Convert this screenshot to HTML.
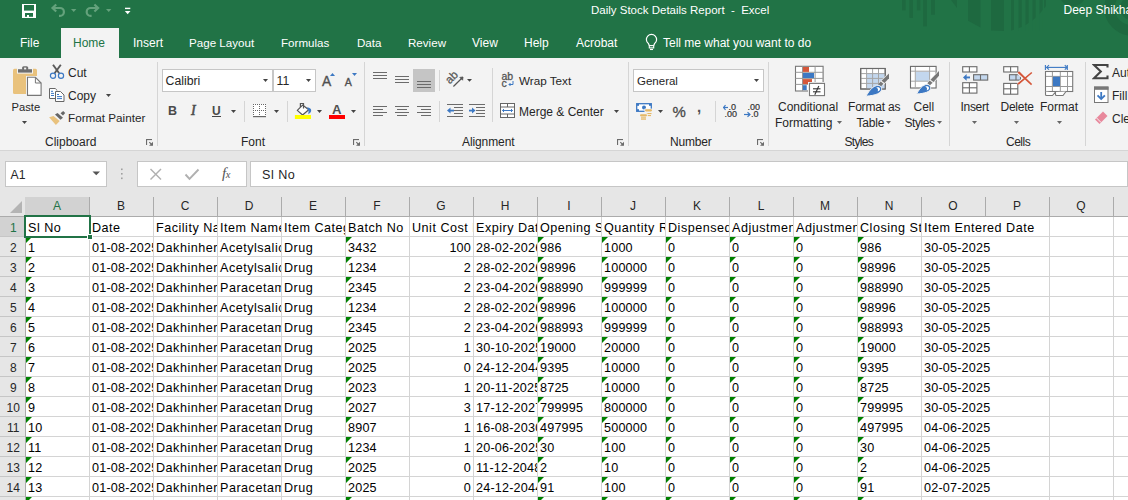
<!DOCTYPE html>
<html><head><meta charset="utf-8"><style>*{margin:0;padding:0;box-sizing:border-box}
html,body{width:1128px;height:500px;overflow:hidden;background:#fff;font-family:"Liberation Sans",sans-serif;position:relative}
.a{position:absolute;white-space:nowrap}
.tt{position:absolute;color:#fff;font-size:12px;white-space:nowrap}
.tab{position:absolute;color:#fff;font-size:12px;top:37px;white-space:nowrap}
.rl{position:absolute;font-size:12px;color:#262626;white-space:nowrap}
.hd{font-size:12px;text-align:center;line-height:19px;height:19px}
.c{font-size:12.6px;color:#000;height:19px;line-height:19px;overflow:hidden;padding-left:2px;top:0}
.txt{letter-spacing:0.5px}
.num{letter-spacing:0.2px}

.rhd{font-size:12px;padding-left:1.5px;padding-top:1px}
</style></head><body><div class="a" style="left:0px;top:0px;width:1128px;height:58px;background:#217346;"></div>
<svg class="a" style="left:880px;top:0px" width="248" height="58" viewBox="0 0 248 58">
<rect x="22" y="0" width="3.6" height="10.4" fill="#1e6940"/>
<rect x="29.4" y="0" width="3.6" height="17.9" fill="#1e6940"/>
<rect x="36.8" y="0" width="3.5" height="10.4" fill="#1e6940"/>
<rect x="43.2" y="0" width="3.7" height="26.4" fill="#1e6940"/>
<rect x="51" y="0" width="4" height="14.7" fill="#1e6940"/>
<path d="M71 0 L77 0 L77 8 Z" fill="#1e6940"/>
<path d="M88 0 L100.5 0 L100.5 27.4 L88 20.7 Z" fill="#1e6940"/>
<path d="M111 0 L124 0 L124 31 L111 30.5 Z" fill="#1e6940"/>
<path d="M131 0 L166 0 L166 6 Q152 26 131 30.5 Z" fill="#1e6940"/>
<rect x="134" y="0" width="4.6" height="31" fill="#217346"/>
<rect x="141.8" y="0" width="3.7" height="31" fill="#217346"/>
<rect x="148.7" y="0" width="3.8" height="31" fill="#217346"/>
<rect x="155.7" y="0" width="3.8" height="31" fill="#217346"/>
<rect x="162.7" y="0" width="1.3" height="31" fill="#217346"/>
<path d="M181 0 L204 0 Q200 6 192.5 6 Q185 6 181 0 Z" fill="#1e6940"/>
<circle cx="252" cy="8" r="22.5" stroke="#1e6940" stroke-width="10.4" fill="none"/><circle cx="252" cy="8" r="12" fill="#1e6940"/>
</svg>
<div class="a" style="left:591px;top:5.27px;font-size:11.5px;line-height:1;color:#fff;">Daily Stock Details Report&nbsp; - &nbsp;Excel</div>
<div class="a" style="left:1063.5px;top:4.04px;font-size:12px;line-height:1;color:#fff;">Deep Shikha</div>
<svg class="a" style="left:21px;top:3px" width="16" height="16" viewBox="0 0 16 16"><rect x="1" y="1" width="14" height="14" fill="#fff"/><rect x="3" y="2" width="10" height="5.6" fill="#217346"/><rect x="4" y="10" width="8" height="3.8" fill="#217346"/><rect x="6" y="12" width="2" height="2" fill="#fff"/></svg>
<svg class="a" style="left:48px;top:2px" width="20" height="18" viewBox="0 0 20 18"><path d="M4.5,6 L12,6 A3.9,3.9 0 0 1 12,13.8 L11,13.8" stroke="#64a27c" stroke-width="2.2" fill="none"/><polyline points="8.2,2.5 4.5,6 8.2,9.5" stroke="#64a27c" stroke-width="2.2" fill="none"/></svg>
<svg class="a" style="left:70.8px;top:8.8px" width="6" height="4" viewBox="0 0 6 4"><polygon points="0,0 5.4,0 2.7,3" fill="#64a27c"/></svg>
<svg class="a" style="left:83px;top:2px" width="20" height="18" viewBox="0 0 20 18"><path d="M15.1,6 L7.6,6 A3.9,3.9 0 0 0 7.6,13.8 L8.6,13.8" stroke="#64a27c" stroke-width="2.2" fill="none"/><polyline points="11.4,2.5 15.1,6 11.4,9.5" stroke="#64a27c" stroke-width="2.2" fill="none"/></svg>
<svg class="a" style="left:106px;top:8.8px" width="6" height="4" viewBox="0 0 6 4"><polygon points="0,0 5.4,0 2.7,3" fill="#64a27c"/></svg>
<svg class="a" style="left:124px;top:7px" width="8" height="8" viewBox="0 0 8 8"><rect x="1" y="0.7" width="5.3" height="1.4" fill="#fff"/><polygon points="0.8,4 6.5,4 3.65,7.2" fill="#fff"/></svg>
<div class="a" style="left:61px;top:28px;width:58px;height:30px;background:#f3f3f3;"></div>
<div class="a" style="left:20px;top:36.84px;font-size:12px;line-height:1;color:#fff;">File</div>
<div class="a" style="left:73px;top:36.84px;font-size:12px;line-height:1;color:#217346;">Home</div>
<div class="a" style="left:133px;top:36.84px;font-size:12px;line-height:1;color:#fff;">Insert</div>
<div class="a" style="left:189px;top:37.18px;font-size:11.6px;line-height:1;color:#fff;">Page Layout</div>
<div class="a" style="left:281px;top:37.18px;font-size:11.6px;line-height:1;color:#fff;">Formulas</div>
<div class="a" style="left:357px;top:37.18px;font-size:11.6px;line-height:1;color:#fff;">Data</div>
<div class="a" style="left:408px;top:37.18px;font-size:11.6px;line-height:1;color:#fff;">Review</div>
<div class="a" style="left:472px;top:36.84px;font-size:12px;line-height:1;color:#fff;">View</div>
<div class="a" style="left:524px;top:36.84px;font-size:12px;line-height:1;color:#fff;">Help</div>
<div class="a" style="left:576px;top:36.84px;font-size:12px;line-height:1;color:#fff;">Acrobat</div>
<div class="a" style="left:663px;top:36.84px;font-size:12px;line-height:1;color:#fff;">Tell me what you want to do</div>
<svg class="a" style="left:644px;top:32px" width="16" height="20" viewBox="0 0 16 20"><path d="M5.3,13.6 L4.4,11.6 A5.1,5.1 0 1 1 10.6,11.6 L9.7,13.6" stroke="#fff" stroke-width="1.2" fill="none" stroke-linejoin="round"/><rect x="5.3" y="13.6" width="4.4" height="2.3" stroke="#fff" stroke-width="1.1" fill="none"/><line x1="6" y1="17.5" x2="9" y2="17.5" stroke="#fff" stroke-width="1.1"/></svg>
<div class="a" style="left:0px;top:58px;width:1128px;height:92px;background:#f3f3f3;"></div>
<div class="a" style="left:0px;top:150px;width:1128px;height:1px;background:#d5d5d5;"></div>
<div class="a" style="left:157px;top:62px;width:1px;height:84px;background:#d5d5d5;"></div>
<div class="a" style="left:364px;top:62px;width:1px;height:84px;background:#d5d5d5;"></div>
<div class="a" style="left:628px;top:62px;width:1px;height:84px;background:#d5d5d5;"></div>
<div class="a" style="left:768px;top:62px;width:1px;height:84px;background:#d5d5d5;"></div>
<div class="a" style="left:949px;top:62px;width:1px;height:84px;background:#d5d5d5;"></div>
<div class="a" style="left:1085px;top:62px;width:1px;height:84px;background:#d5d5d5;"></div>
<div class="a" style="left:244px;top:101px;width:1px;height:21px;background:#d5d5d5;"></div>
<div class="a" style="left:287px;top:101px;width:1px;height:21px;background:#d5d5d5;"></div>
<div class="a" style="left:439px;top:101px;width:1px;height:21px;background:#d5d5d5;"></div>
<div class="a" style="left:715px;top:101px;width:1px;height:21px;background:#d5d5d5;"></div>
<div class="a" style="left:439px;top:70px;width:1px;height:21px;background:#d5d5d5;"></div>
<div class="a" style="left:492px;top:68px;width:1px;height:54px;background:#d5d5d5;"></div>
<div class="a" style="left:45px;top:135.84px;font-size:12px;line-height:1;color:#262626;letter-spacing:0px">Clipboard</div>
<div class="a" style="left:241px;top:135.84px;font-size:12px;line-height:1;color:#262626;letter-spacing:0px">Font</div>
<div class="a" style="left:462px;top:135.84px;font-size:12px;line-height:1;color:#262626;letter-spacing:-0.1px">Alignment</div>
<div class="a" style="left:670px;top:135.84px;font-size:12px;line-height:1;color:#262626;letter-spacing:-0.2px">Number</div>
<div class="a" style="left:844.5px;top:135.84px;font-size:12px;line-height:1;color:#262626;letter-spacing:-0.7px">Styles</div>
<div class="a" style="left:1006px;top:135.84px;font-size:12px;line-height:1;color:#262626;letter-spacing:-0.5px">Cells</div>
<svg class="a" style="left:145px;top:138px" width="10" height="10" viewBox="0 0 10 10"><rect x="1" y="1" width="6" height="1.1" fill="#6b6b6b"/><rect x="1" y="1" width="1.1" height="6" fill="#6b6b6b"/><polygon points="8,3.8 8,7.8 4,7.8" fill="#6b6b6b"/><line x1="4.3" y1="4.1" x2="7.2" y2="7" stroke="#6b6b6b" stroke-width="1.1"/></svg>
<svg class="a" style="left:352px;top:138px" width="10" height="10" viewBox="0 0 10 10"><rect x="1" y="1" width="6" height="1.1" fill="#6b6b6b"/><rect x="1" y="1" width="1.1" height="6" fill="#6b6b6b"/><polygon points="8,3.8 8,7.8 4,7.8" fill="#6b6b6b"/><line x1="4.3" y1="4.1" x2="7.2" y2="7" stroke="#6b6b6b" stroke-width="1.1"/></svg>
<svg class="a" style="left:616px;top:138px" width="10" height="10" viewBox="0 0 10 10"><rect x="1" y="1" width="6" height="1.1" fill="#6b6b6b"/><rect x="1" y="1" width="1.1" height="6" fill="#6b6b6b"/><polygon points="8,3.8 8,7.8 4,7.8" fill="#6b6b6b"/><line x1="4.3" y1="4.1" x2="7.2" y2="7" stroke="#6b6b6b" stroke-width="1.1"/></svg>
<svg class="a" style="left:756px;top:138px" width="10" height="10" viewBox="0 0 10 10"><rect x="1" y="1" width="6" height="1.1" fill="#6b6b6b"/><rect x="1" y="1" width="1.1" height="6" fill="#6b6b6b"/><polygon points="8,3.8 8,7.8 4,7.8" fill="#6b6b6b"/><line x1="4.3" y1="4.1" x2="7.2" y2="7" stroke="#6b6b6b" stroke-width="1.1"/></svg>
<svg class="a" style="left:10px;top:62px" width="35" height="38" viewBox="0 0 35 38">
<rect x="3" y="6.8" width="24" height="25.1" rx="1.5" fill="#e9c27d"/>
<rect x="7" y="6" width="16" height="5.6" fill="#f3f3f3"/>
<rect x="8" y="7.2" width="14" height="3.4" fill="#6f6f6f"/>
<rect x="12.1" y="4.2" width="6.1" height="4" rx="1.5" fill="#6f6f6f"/>
<rect x="14.1" y="5.6" width="2.1" height="1.8" fill="#f3f3f3"/>
<rect x="16" y="14" width="17" height="21" fill="#f3f3f3"/>
<path d="M17.5,15.3 L25.4,15.3 L31.1,21 L31.1,33.4 L17.5,33.4 Z" fill="#fff" stroke="#777" stroke-width="1.1"/>
<polyline points="25.4,15.3 25.4,21 31.1,21" fill="none" stroke="#777" stroke-width="1"/>
</svg>
<div class="a" style="left:11.5px;top:101.52px;font-size:11.2px;line-height:1;color:#262626;">Paste</div>
<svg class="a" style="left:22px;top:121px" width="6" height="4" viewBox="0 0 6 4"><polygon points="0,0 5,0 2.5,3" fill="#444"/></svg>
<svg class="a" style="left:46px;top:62px" width="22" height="20" viewBox="0 0 22 20">
<path d="M7,2.8 L13.2,11.2" stroke="#5a5a5a" stroke-width="1.9"/>
<path d="M14.8,2.8 L8.6,11.2" stroke="#5a5a5a" stroke-width="1.9"/>
<circle cx="7" cy="13.8" r="2.6" fill="none" stroke="#3c78c3" stroke-width="1.2"/>
<circle cx="15" cy="13.8" r="2.6" fill="none" stroke="#3c78c3" stroke-width="1.2"/>
</svg>
<div class="a" style="left:68px;top:66.84px;font-size:12px;line-height:1;color:#262626;">Cut</div>
<svg class="a" style="left:48px;top:87px" width="18" height="16" viewBox="0 0 18 16">
<path d="M7,11.5 H1.5 V1.5 H7.2 L9.3,3.6" stroke="#666" stroke-width="1" fill="#fff"/>
<rect x="2.5" y="2.5" width="5" height="8.5" fill="#fff"/>
<line x1="3" y1="4.3" x2="5" y2="4.3" stroke="#3c78c3"/><line x1="3" y1="6.4" x2="6" y2="6.4" stroke="#3c78c3"/><line x1="3" y1="8.5" x2="6" y2="8.5" stroke="#3c78c3"/>
<path d="M7.5,4.5 H12.5 L16,8 V14.5 H7.5 Z" fill="#fff" stroke="#666" stroke-width="1"/>
<line x1="9" y1="7.5" x2="11" y2="7.5" stroke="#3c78c3"/><line x1="9" y1="9.6" x2="14" y2="9.6" stroke="#3c78c3"/><line x1="9" y1="11.6" x2="14" y2="11.6" stroke="#3c78c3"/>
</svg>
<div class="a" style="left:68px;top:89.84px;font-size:12px;line-height:1;color:#262626;">Copy</div>
<svg class="a" style="left:106px;top:94px" width="6" height="4" viewBox="0 0 6 4"><polygon points="0,0 5,0 2.5,3" fill="#444"/></svg>
<svg class="a" style="left:46px;top:106px" width="22" height="22" viewBox="0 0 22 22">
<polygon points="3.1,11.2 7.5,9.9 13.7,15 9.9,18.9" fill="#e9c27d"/>
<polygon points="9,8.6 11.5,7 17,11.7 14.5,13.7" fill="#666"/>
<polygon points="14.5,7.3 17.2,5.1 19.2,7 17,9.5" fill="#666"/>
</svg>
<div class="a" style="left:68px;top:112.10px;font-size:11.7px;line-height:1;color:#262626;">Format Painter</div>
<div class="a" style="left:162px;top:69px;width:111px;height:23px;background:#fff;border:1px solid #c6c6c6"></div>
<div class="a" style="left:273px;top:69px;width:43px;height:23px;background:#fff;border:1px solid #c6c6c6"></div>
<div class="a" style="left:165.5px;top:75.19px;font-size:12.3px;line-height:1;color:#262626;">Calibri</div>
<svg class="a" style="left:263px;top:79px" width="6" height="4" viewBox="0 0 6 4"><polygon points="0,0 5,0 2.5,3" fill="#444"/></svg>
<div class="a" style="left:276.5px;top:75.19px;font-size:12.3px;line-height:1;color:#262626;">11</div>
<svg class="a" style="left:306px;top:79px" width="6" height="4" viewBox="0 0 6 4"><polygon points="0,0 5,0 2.5,3" fill="#444"/></svg>
<div class="a" style="left:322px;top:74.62px;font-size:13.8px;line-height:1;color:#505050;-webkit-text-stroke:0.35px #505050">A</div>
<svg class="a" style="left:330px;top:73px" width="6" height="4" viewBox="0 0 6 4"><polygon points="0,3 5,3 2.5,0" fill="#3c78c3"/></svg>
<div class="a" style="left:344.8px;top:77.33px;font-size:10.6px;line-height:1;color:#505050;-webkit-text-stroke:0.35px #505050">A</div>
<svg class="a" style="left:352px;top:73px" width="6" height="4" viewBox="0 0 6 4"><polygon points="0,0 5,0 2.5,3" fill="#3c78c3"/></svg>
<div class="a" style="left:168px;top:104.92px;font-size:12.5px;line-height:1;color:#4a4a4a;"><b>B</b></div>
<div class="a" style="left:191px;top:103.65px;font-size:14px;line-height:1;color:#4a4a4a;font-family:Liberation Serif;-webkit-text-stroke:0.5px #4a4a4a"><i>I</i></div>
<div class="a" style="left:212px;top:105.34px;font-size:12px;line-height:1;color:#4a4a4a;"><b>U</b></div>
<div class="a" style="left:212px;top:116px;width:9px;height:1.2px;background:#444;"></div>
<svg class="a" style="left:231px;top:110px" width="6" height="4" viewBox="0 0 6 4"><polygon points="0,0 5,0 2.5,3" fill="#444"/></svg>
<svg class="a" style="left:253px;top:104px" width="14" height="14" viewBox="0 0 14 14"><rect x="0" y="0" width="13" height="13" fill="#fff"/><rect x="0" y="0" width="1" height="1" fill="#666"/><rect x="2" y="0" width="1" height="1" fill="#666"/><rect x="4" y="0" width="1" height="1" fill="#666"/><rect x="6" y="0" width="1" height="1" fill="#666"/><rect x="8" y="0" width="1" height="1" fill="#666"/><rect x="10" y="0" width="1" height="1" fill="#666"/><rect x="12" y="0" width="1" height="1" fill="#666"/><rect x="0" y="2" width="1" height="1" fill="#666"/><rect x="6" y="2" width="1" height="1" fill="#666"/><rect x="12" y="2" width="1" height="1" fill="#666"/><rect x="0" y="4" width="1" height="1" fill="#666"/><rect x="6" y="4" width="1" height="1" fill="#666"/><rect x="12" y="4" width="1" height="1" fill="#666"/><rect x="0" y="6" width="1" height="1" fill="#666"/><rect x="2" y="6" width="1" height="1" fill="#666"/><rect x="4" y="6" width="1" height="1" fill="#666"/><rect x="6" y="6" width="1" height="1" fill="#666"/><rect x="8" y="6" width="1" height="1" fill="#666"/><rect x="10" y="6" width="1" height="1" fill="#666"/><rect x="12" y="6" width="1" height="1" fill="#666"/><rect x="0" y="8" width="1" height="1" fill="#666"/><rect x="6" y="8" width="1" height="1" fill="#666"/><rect x="12" y="8" width="1" height="1" fill="#666"/><rect x="0" y="10" width="1" height="1" fill="#666"/><rect x="6" y="10" width="1" height="1" fill="#666"/><rect x="12" y="10" width="1" height="1" fill="#666"/><rect x="0" y="12" width="13" height="1.2" fill="#666"/></svg>
<svg class="a" style="left:274px;top:110px" width="6" height="4" viewBox="0 0 6 4"><polygon points="0,0 5,0 2.5,3" fill="#444"/></svg>
<svg class="a" style="left:292px;top:100px" width="22" height="22" viewBox="0 0 22 22"><polygon points="5.3,10.4 10.6,5.1 16.7,9.7 10.6,15" fill="#fff" stroke="#555" stroke-width="1.2" stroke-linejoin="round"/><path d="M8.4,7 V3.5 H11.5 V8.6" stroke="#555" stroke-width="1.2" fill="none"/><path d="M15,7.3 Q19.5,8 19.2,11 Q18.8,13 16.3,14.2 Q17.3,11 15,7.3 Z" fill="#3c78c3"/><rect x="2.9" y="15" width="16.1" height="4" fill="#ffff00"/></svg>
<svg class="a" style="left:317px;top:110px" width="6" height="4" viewBox="0 0 6 4"><polygon points="0,0 5,0 2.5,3" fill="#444"/></svg>
<div class="a" style="left:332px;top:103.33px;font-size:13.2px;line-height:1;color:#505050;"><b>A</b></div>
<div class="a" style="left:329px;top:115px;width:16px;height:4px;background:#ff0000;"></div>
<svg class="a" style="left:351px;top:110px" width="6" height="4" viewBox="0 0 6 4"><polygon points="0,0 5,0 2.5,3" fill="#444"/></svg>
<svg class="a" style="left:373px;top:72px" width="14" height="8" viewBox="0 0 14 8"><rect x="0" y="0" width="14" height="1" fill="#6b6b6b"/><rect x="0" y="3" width="14" height="1" fill="#6b6b6b"/><rect x="0" y="6" width="14" height="1" fill="#6b6b6b"/></svg>
<svg class="a" style="left:395px;top:76px" width="14" height="8" viewBox="0 0 14 8"><rect x="0" y="0" width="14" height="1" fill="#6b6b6b"/><rect x="0" y="3" width="14" height="1" fill="#6b6b6b"/><rect x="0" y="6" width="14" height="1" fill="#6b6b6b"/></svg>
<div class="a" style="left:413px;top:69px;width:22px;height:23px;background:#c5c5c5;"></div>
<svg class="a" style="left:417px;top:81px" width="14" height="8" viewBox="0 0 14 8"><rect x="0" y="0" width="14" height="1" fill="#6b6b6b"/><rect x="0" y="3" width="14" height="1" fill="#6b6b6b"/><rect x="0" y="6" width="14" height="1" fill="#6b6b6b"/></svg>
<svg class="a" style="left:443px;top:68px" width="32" height="22" viewBox="0 0 32 22"><text x="0" y="0" transform="translate(6.8,16.6) rotate(-45)" font-size="11.5" fill="#555" font-family="Liberation Sans" stroke="#555" stroke-width="0.25">ab</text><line x1="10.4" y1="18.5" x2="19.8" y2="9.3" stroke="#555" stroke-width="1.2"/><polygon points="20,9 16.8,9.4 19.6,12.2" fill="#555" stroke="#555" stroke-width="0.8"/><polygon points="24,11 29,11 26.5,13.8" fill="#444"/></svg>
<svg class="a" style="left:373px;top:106px" width="14" height="10" viewBox="0 0 14 10"><rect x="0" y="0" width="14" height="1" fill="#6b6b6b"/><rect x="0" y="3" width="10" height="1" fill="#6b6b6b"/><rect x="0" y="6" width="14" height="1" fill="#6b6b6b"/><rect x="0" y="9" width="10" height="1" fill="#6b6b6b"/></svg>
<svg class="a" style="left:395px;top:106px" width="14" height="10" viewBox="0 0 14 10"><rect x="0" y="0" width="14" height="1" fill="#6b6b6b"/><rect x="2" y="3" width="10" height="1" fill="#6b6b6b"/><rect x="0" y="6" width="14" height="1" fill="#6b6b6b"/><rect x="2" y="9" width="10" height="1" fill="#6b6b6b"/></svg>
<svg class="a" style="left:417px;top:106px" width="14" height="10" viewBox="0 0 14 10"><rect x="0" y="0" width="14" height="1" fill="#6b6b6b"/><rect x="4" y="3" width="10" height="1" fill="#6b6b6b"/><rect x="0" y="6" width="14" height="1" fill="#6b6b6b"/><rect x="4" y="9" width="10" height="1" fill="#6b6b6b"/></svg>
<svg class="a" style="left:447px;top:104px" width="17" height="13" viewBox="0 0 17 13"><rect x="0" y="0" width="16" height="1" fill="#6b6b6b"/><rect x="7" y="3" width="9" height="1" fill="#6b6b6b"/><rect x="7" y="6" width="9" height="1" fill="#6b6b6b"/><rect x="7" y="9" width="9" height="1" fill="#6b6b6b"/><rect x="0" y="12" width="16" height="1" fill="#6b6b6b"/><polygon points="0,6.5 3.5,3.5 3.5,9.5" fill="#3c78c3"/><rect x="3" y="5.7" width="4" height="1.8" fill="#3c78c3"/></svg>
<svg class="a" style="left:469px;top:104px" width="17" height="13" viewBox="0 0 17 13"><rect x="0" y="0" width="16" height="1" fill="#6b6b6b"/><rect x="7" y="3" width="9" height="1" fill="#6b6b6b"/><rect x="7" y="6" width="9" height="1" fill="#6b6b6b"/><rect x="7" y="9" width="9" height="1" fill="#6b6b6b"/><rect x="0" y="12" width="16" height="1" fill="#6b6b6b"/><polygon points="6.5,6.5 3,3.5 3,9.5" fill="#3c78c3"/><rect x="0" y="5.7" width="4" height="1.8" fill="#3c78c3"/></svg>
<svg class="a" style="left:501px;top:72px" width="15" height="16" viewBox="0 0 15 16"><text x="0.5" y="8" font-size="10.5" fill="#555" stroke="#555" stroke-width="0.3" font-family="Liberation Sans">ab</text><text x="0.5" y="15" font-size="10.5" fill="#555" stroke="#555" stroke-width="0.3" font-family="Liberation Sans">c</text><path d="M12 9 L12 12.5 L8 12.5" stroke="#3c78c3" fill="none" stroke-width="1"/><polyline points="9.5,11 8,12.5 9.5,14" stroke="#3c78c3" fill="none"/></svg>
<div class="a" style="left:519px;top:75.10px;font-size:11.7px;line-height:1;color:#262626;">Wrap Text</div>
<svg class="a" style="left:500px;top:103px" width="16" height="15" viewBox="0 0 16 15"><rect x="0.5" y="0.5" width="14" height="14" fill="#fff" stroke="#666" stroke-width="1"/><line x1="0.5" y1="4" x2="14.5" y2="4" stroke="#666"/><line x1="0.5" y1="11" x2="14.5" y2="11" stroke="#666"/><line x1="7.5" y1="0.5" x2="7.5" y2="4" stroke="#666"/><line x1="7.5" y1="11" x2="7.5" y2="14.5" stroke="#666"/><line x1="2.5" y1="7.5" x2="12.5" y2="7.5" stroke="#3c78c3" stroke-width="1"/><polyline points="4,6 2.5,7.5 4,9" stroke="#3c78c3" fill="none"/><polyline points="11,6 12.5,7.5 11,9" stroke="#3c78c3" fill="none"/></svg>
<div class="a" style="left:519px;top:105.84px;font-size:12px;line-height:1;color:#262626;">Merge &amp; Center</div>
<svg class="a" style="left:614px;top:110px" width="6" height="4" viewBox="0 0 6 4"><polygon points="0,0 5,0 2.5,3" fill="#444"/></svg>
<div class="a" style="left:633px;top:69px;width:131px;height:23px;background:#fff;border:1px solid #c6c6c6"></div>
<div class="a" style="left:637px;top:75.87px;font-size:11.5px;line-height:1;color:#262626;">General</div>
<svg class="a" style="left:754px;top:79px" width="6" height="4" viewBox="0 0 6 4"><polygon points="0,0 5,0 2.5,3" fill="#444"/></svg>
<svg class="a" style="left:633px;top:100px" width="24" height="22" viewBox="0 0 24 22"><rect x="3.7" y="3.7" width="14.6" height="7.6" fill="#fff" stroke="#3c78c3" stroke-width="1.3"/><rect x="4" y="4" width="2" height="1.8" fill="#3c78c3"/><rect x="16" y="4" width="2" height="1.8" fill="#3c78c3"/><rect x="4" y="9.2" width="2" height="1.8" fill="#3c78c3"/><circle cx="11" cy="7.4" r="2" fill="#3c78c3"/><rect x="11.5" y="8.6" width="8.5" height="8.5" fill="#f3f3f3"/><rect x="12" y="9.2" width="7" height="2.2" rx="1.1" fill="#e5b865"/><rect x="13.5" y="13" width="5" height="1.1" fill="#e5b865"/><rect x="14.5" y="15" width="3.5" height="1.1" fill="#e5b865"/><rect x="6.5" y="13.3" width="8" height="7" fill="#f3f3f3"/><rect x="7" y="14.2" width="7" height="2.2" rx="1.1" fill="#e5b865"/><rect x="8" y="17.3" width="5" height="1.1" fill="#e5b865"/><rect x="8" y="18.6" width="5" height="1.1" fill="#e5b865"/></svg>
<svg class="a" style="left:658px;top:110px" width="6" height="4" viewBox="0 0 6 4"><polygon points="0,0 5,0 2.5,3" fill="#444"/></svg>
<div class="a" style="left:672.5px;top:104.30px;font-size:15px;line-height:1;color:#4a4a4a;-webkit-text-stroke:0.3px #4a4a4a">%</div>
<div class="a" style="left:697px;top:98.80px;font-size:15px;line-height:1;color:#505050;"><b>,</b></div>
<svg class="a" style="left:723px;top:104px" width="15" height="14" viewBox="0 0 15 14"><text x="5.5" y="6" font-size="9" fill="#333" stroke="#333" stroke-width="0.2" font-family="Liberation Sans">.0</text><text x="1.5" y="13" font-size="9" fill="#333" stroke="#333" stroke-width="0.2" font-family="Liberation Sans">.00</text><line x1="0.5" y1="3.5" x2="5" y2="3.5" stroke="#3c78c3" stroke-width="1.2"/><polyline points="2.5,1.2 0.5,3.5 2.5,5.8" stroke="#3c78c3" fill="none" stroke-width="1.2"/></svg>
<svg class="a" style="left:744px;top:104px" width="16" height="14" viewBox="0 0 16 14"><text x="3.5" y="6" font-size="9" fill="#333" stroke="#333" stroke-width="0.2" font-family="Liberation Sans">.00</text><text x="7" y="13" font-size="9" fill="#333" stroke="#333" stroke-width="0.2" font-family="Liberation Sans">.0</text><line x1="0" y1="10.5" x2="6" y2="10.5" stroke="#3c78c3" stroke-width="1.2"/><polyline points="3.5,8.2 6,10.5 3.5,12.8" stroke="#3c78c3" fill="none" stroke-width="1.2"/></svg>
<svg class="a" style="left:793px;top:64px" width="34" height="34" viewBox="0 0 34 34"><rect x="2.5" y="2.3" width="27.6" height="24.7" fill="#fff" stroke="#777" stroke-width="1.1"/><line x1="9.5" y1="2.3" x2="9.5" y2="27" stroke="#999"/><line x1="22.1" y1="2.3" x2="22.1" y2="27" stroke="#999"/><line x1="2.5" y1="8.3" x2="30.1" y2="8.3" stroke="#999"/><line x1="2.5" y1="14.4" x2="30.1" y2="14.4" stroke="#999"/><line x1="2.5" y1="20.4" x2="30.1" y2="20.4" stroke="#999"/><rect x="9.9" y="3" width="6.1" height="4.9" fill="#d5573a"/><rect x="9.9" y="15.1" width="9.1" height="4.9" fill="#d5573a"/><rect x="9.9" y="9" width="11.1" height="5" fill="#3c78c3"/><rect x="9.9" y="21.2" width="3.8" height="4.9" fill="#3c78c3"/><rect x="15" y="18" width="19" height="16" fill="#f3f3f3"/><rect x="16.5" y="19.4" width="15" height="12.2" fill="#fff" stroke="#777" stroke-width="1.1"/><line x1="20" y1="24.8" x2="27.5" y2="24.8" stroke="#333" stroke-width="1.1"/><line x1="20" y1="27.8" x2="27.5" y2="27.8" stroke="#333" stroke-width="1.1"/><line x1="25.8" y1="22" x2="21.8" y2="30.8" stroke="#333" stroke-width="1.1"/></svg>
<div class="a" style="left:778px;top:100.84px;font-size:12px;line-height:1;color:#262626;">Conditional</div>
<div class="a" style="left:775px;top:116.84px;font-size:12px;line-height:1;color:#262626;">Formatting</div>
<svg class="a" style="left:837px;top:121px" width="6" height="4" viewBox="0 0 6 4"><polygon points="0,0 5,0 2.5,3" fill="#666"/></svg>
<svg class="a" style="left:858px;top:66px" width="34" height="32" viewBox="0 0 34 32"><rect x="2.7" y="2.5" width="24.5" height="20.5" fill="#fff" stroke="#6b6b6b" stroke-width="1.1"/><rect x="8.6" y="7.6" width="18" height="15" fill="#c3d7ee"/><g stroke="#a5a5a5" stroke-width="1"><line x1="8.6" y1="3" x2="8.6" y2="22.5"/><line x1="14.6" y1="3" x2="14.6" y2="22.5"/><line x1="20.5" y1="3" x2="20.5" y2="22.5"/><line x1="3" y1="7.6" x2="27" y2="7.6"/><line x1="3" y1="12.4" x2="27" y2="12.4"/><line x1="3" y1="17.4" x2="27" y2="17.4"/></g><rect x="2.7" y="2.5" width="24.5" height="20.5" fill="none" stroke="#6b6b6b" stroke-width="1.1"/><path d="M31.5,6 L31.5,13 L25,19.5 L21,16.5 Z" fill="#f3f3f3"/><path d="M31,7.5 L31,12.3 L26.5,17 L23.5,14.7 Z" fill="#777"/><path d="M22.7,15.6 L25.5,17.8 L23,20.3 L20.3,18.2 Z" fill="#777"/><path d="M8,30.2 C10.5,26 13.5,21 18.5,19.6 C22,18.8 24,21 23.6,23.8 C23,27 18,29.5 8,30.2 Z" fill="#3c78c3" stroke="#f3f3f3" stroke-width="1"/><path d="M18.2,21.6 C20,20.8 22.2,21.4 22,23.2 C21.8,24.6 20.5,25.2 19.6,25.3 C20.4,24.2 20.2,22.6 18.2,21.6 Z" fill="#fff"/></svg>
<div class="a" style="left:848px;top:100.84px;font-size:12px;line-height:1;color:#262626;letter-spacing:-0.2px">Format as</div>
<div class="a" style="left:856.5px;top:116.84px;font-size:12px;line-height:1;color:#262626;letter-spacing:-0.2px">Table</div>
<svg class="a" style="left:886px;top:121px" width="6" height="4" viewBox="0 0 6 4"><polygon points="0,0 5,0 2.5,3" fill="#666"/></svg>
<svg class="a" style="left:908px;top:64px" width="34" height="32" viewBox="0 0 34 32"><rect x="2.5" y="2.4" width="25.6" height="21.6" fill="#fff" stroke="#6b6b6b" stroke-width="1.1"/><rect x="7.8" y="7.7" width="13.4" height="9.2" fill="#c3d7ee"/><g stroke="#a5a5a5" stroke-width="1"><line x1="7.3" y1="3" x2="7.3" y2="23.5"/><line x1="21.6" y1="3" x2="21.6" y2="23.5"/><line x1="3" y1="7.2" x2="27.6" y2="7.2"/><line x1="3" y1="17.2" x2="27.6" y2="17.2"/></g><path d="M31.5,5.5 L31.5,12.5 L24,20.5 L20,17.5 Z" fill="#f3f3f3"/><path d="M31,7 L31,11.8 L25.5,18 L22.5,15.7 Z" fill="#777"/><path d="M21.7,16.6 L24.5,18.8 L22,21.3 L19.3,19.2 Z" fill="#777"/><path d="M8.5,30 C11,26 13,22 17.5,20.6 C21,19.8 23,22 22.6,24.6 C22,27.8 17,29.5 8.5,30 Z" fill="#3c78c3" stroke="#f3f3f3" stroke-width="1"/><path d="M17.2,22.6 C19,21.8 21.2,22.4 21,24.2 C20.8,25.6 19.5,26.2 18.6,26.3 C19.4,25.2 19.2,23.6 17.2,22.6 Z" fill="#fff"/></svg>
<div class="a" style="left:913.5px;top:100.84px;font-size:12px;line-height:1;color:#262626;">Cell</div>
<div class="a" style="left:904.5px;top:116.84px;font-size:12px;line-height:1;color:#262626;letter-spacing:-0.45px">Styles</div>
<svg class="a" style="left:937px;top:121px" width="6" height="4" viewBox="0 0 6 4"><polygon points="0,0 5,0 2.5,3" fill="#666"/></svg>
<svg class="a" style="left:958px;top:62px" width="32" height="34" viewBox="0 0 32 34"><rect x="4.7" y="4.7" width="14.2" height="5.3" fill="#fff" stroke="#6b6b6b" stroke-width="1.1"/><line x1="11.4" y1="4.7" x2="11.4" y2="10" stroke="#6b6b6b" stroke-width="1.1"/><rect x="15.6" y="12.7" width="14.1" height="5.4" fill="#c3d7ee" stroke="#6b6b6b" stroke-width="1.1"/><line x1="22.5" y1="12.7" x2="22.5" y2="18.1" stroke="#6b6b6b" stroke-width="1.1"/><polygon points="5,15.4 8.6,12 8.6,18.8" fill="#3c78c3"/><rect x="8" y="14.5" width="4" height="1.9" fill="#3c78c3"/><rect x="4.7" y="20.7" width="14.2" height="10.4" fill="#fff" stroke="#6b6b6b" stroke-width="1.1"/><line x1="11.4" y1="20.7" x2="11.4" y2="31.1" stroke="#6b6b6b" stroke-width="1.1"/><line x1="4.7" y1="25.8" x2="18.9" y2="25.8" stroke="#6b6b6b" stroke-width="1.1"/></svg>
<div class="a" style="left:960.5px;top:100.84px;font-size:12px;line-height:1;color:#262626;letter-spacing:-0.3px">Insert</div>
<svg class="a" style="left:972px;top:121px" width="6" height="4" viewBox="0 0 6 4"><polygon points="0,0 5,0 2.5,3" fill="#666"/></svg>
<svg class="a" style="left:999px;top:62px" width="36" height="34" viewBox="0 0 36 34"><rect x="4.7" y="4.7" width="14.1" height="5.3" fill="#fff" stroke="#6b6b6b" stroke-width="1.1"/><line x1="11.6" y1="4.7" x2="11.6" y2="10" stroke="#6b6b6b" stroke-width="1.1"/><rect x="10.5" y="12.7" width="11" height="5.4" fill="#c3d7ee" stroke="#6b6b6b" stroke-width="1.1"/><line x1="17" y1="12.7" x2="17" y2="18.1" stroke="#6b6b6b" stroke-width="1.1"/><rect x="4.7" y="21.4" width="14.1" height="10.8" fill="#fff" stroke="#6b6b6b" stroke-width="1.1"/><line x1="11.6" y1="21.4" x2="11.6" y2="32.2" stroke="#6b6b6b" stroke-width="1.1"/><line x1="4.7" y1="26.8" x2="18.8" y2="26.8" stroke="#6b6b6b" stroke-width="1.1"/><line x1="19.1" y1="10.1" x2="32.8" y2="22.7" stroke="#f3f3f3" stroke-width="4"/><line x1="32.8" y1="10.4" x2="19.1" y2="22.3" stroke="#f3f3f3" stroke-width="4"/><path d="M18.5,10.6 L20.5,9.4 L33,22.6 Z" fill="#d5573a"/><path d="M33.2,10.2 L18.8,22.8 L18.4,21.5 Z" fill="#d5573a"/><line x1="19.3" y1="10.2" x2="32.6" y2="22.6" stroke="#d5573a" stroke-width="1.6"/><line x1="32.8" y1="10.5" x2="19.2" y2="22.1" stroke="#d5573a" stroke-width="1.6"/></svg>
<div class="a" style="left:1000.5px;top:100.84px;font-size:12px;line-height:1;color:#262626;letter-spacing:-0.25px">Delete</div>
<svg class="a" style="left:1014px;top:121px" width="6" height="4" viewBox="0 0 6 4"><polygon points="0,0 5,0 2.5,3" fill="#666"/></svg>
<svg class="a" style="left:1042px;top:62px" width="34" height="36" viewBox="0 0 34 36"><g stroke="#3c78c3" stroke-width="1.1" fill="none"><line x1="3.4" y1="2.9" x2="3.4" y2="7.9"/><line x1="25.3" y1="2.9" x2="25.3" y2="7.9"/><line x1="4.5" y1="5.4" x2="24.5" y2="5.4"/><polyline points="7,3.2 4.6,5.4 7,7.6"/><polyline points="22.8,3.2 25,5.4 22.8,7.6"/></g><rect x="3.5" y="9.5" width="27.2" height="20" fill="#fff"/><g stroke="#999" stroke-width="1"><line x1="10.4" y1="9.5" x2="10.4" y2="29.5"/><line x1="18.3" y1="9.5" x2="18.3" y2="29.5"/><line x1="25.5" y1="9.5" x2="25.5" y2="29.5"/><line x1="3.5" y1="14.4" x2="30.7" y2="14.4"/><line x1="3.5" y1="24.5" x2="30.7" y2="24.5"/></g><rect x="3.5" y="9.5" width="27.2" height="20" fill="none" stroke="#777" stroke-width="1.1"/><rect x="11" y="14.7" width="7" height="9.4" fill="#3c78c3"/><path d="M3.5,29.5 V32.5 Q3.5,33.5 4.5,33.5 H10.5 L13,30.5 M13.5,30 V32.5 Q13.5,33.5 14.5,33.5 H21 L24,29.5" stroke="#777" fill="#fff" stroke-width="1.1"/></svg>
<div class="a" style="left:1040px;top:100.84px;font-size:12px;line-height:1;color:#262626;">Format</div>
<svg class="a" style="left:1056.5px;top:121px" width="6" height="4" viewBox="0 0 6 4"><polygon points="0,0 5,0 2.5,3" fill="#666"/></svg>
<svg class="a" style="left:1092px;top:63px" width="18" height="18" viewBox="0 0 18 18"><path d="M15.5,4.5 L15.5,2 L2,2 L8.8,8.5 L2,15.2 L15.5,15.2 L15.5,12.5" stroke="#444" stroke-width="2.1" fill="none" stroke-linejoin="miter"/></svg>
<div class="a" style="left:1112px;top:66.84px;font-size:12px;line-height:1;color:#262626;">AutoSum</div>
<svg class="a" style="left:1093px;top:86px" width="16" height="18" viewBox="0 0 16 18"><rect x="1.5" y="1" width="13.5" height="15.5" fill="#fff" stroke="#777" stroke-width="1"/><rect x="1" y="0.6" width="14.5" height="3.2" fill="#777"/><line x1="8.2" y1="6" x2="8.2" y2="13" stroke="#3c78c3" stroke-width="1.8"/><polyline points="4.5,9.3 8.2,13 11.9,9.3" stroke="#3c78c3" stroke-width="1.8" fill="none"/></svg>
<div class="a" style="left:1112px;top:89.84px;font-size:12px;line-height:1;color:#262626;">Fill</div>
<svg class="a" style="left:1093px;top:110px" width="16" height="15" viewBox="0 0 16 15"><path d="M2,9.5 L10,1.5 L14.5,6 L6.5,14 Z" fill="#e8889c"/><line x1="3.6" y1="8" x2="8.1" y2="12.5" stroke="#f3f3f3" stroke-width="1"/></svg>
<div class="a" style="left:1112px;top:112.84px;font-size:12px;line-height:1;color:#262626;">Clear</div>
<div class="a" style="left:0px;top:151px;width:1128px;height:46px;background:#e6e6e6;"></div>
<div class="a" style="left:5px;top:161px;width:102px;height:26px;background:#fff;border:1px solid #c6c6c6"></div>
<div class="a" style="left:10.5px;top:169.07px;font-size:12.2px;line-height:1;color:#262626;">A1</div>
<svg class="a" style="left:92px;top:171px" width="9" height="5" viewBox="0 0 9 5"><polygon points="0.5,0.5 8,0.5 4.25,4.3" fill="#555"/></svg>
<svg class="a" style="left:120px;top:167px" width="4" height="14" viewBox="0 0 4 14"><rect x="1" y="1.5" width="1.6" height="1.6" fill="#a0a0a0"/><rect x="1" y="6" width="1.6" height="1.6" fill="#a0a0a0"/><rect x="1" y="10.5" width="1.6" height="1.6" fill="#a0a0a0"/></svg>
<div class="a" style="left:137px;top:161px;width:110px;height:26px;background:#fff;border:1px solid #c6c6c6"></div>
<svg class="a" style="left:149px;top:168px" width="14" height="13" viewBox="0 0 14 13"><line x1="1.5" y1="1" x2="12" y2="11.5" stroke="#b0b0b0" stroke-width="1.4"/><line x1="12" y1="1" x2="1.5" y2="11.5" stroke="#b0b0b0" stroke-width="1.4"/></svg>
<svg class="a" style="left:184px;top:168px" width="16" height="13" viewBox="0 0 16 13"><polyline points="1.5,6.5 5.5,10.8 14.5,1.5" stroke="#b0b0b0" stroke-width="1.9" fill="none"/></svg>
<div class="a" style="left:222px;top:166.30px;font-size:15px;line-height:1;color:#555;font-family:Liberation Serif"><i>f</i><span style="font-size:10.5px;position:relative;left:-0.5px"><i>x</i></span></div>
<div class="a" style="left:250px;top:161px;width:878px;height:26px;background:#fff;border:1px solid #c6c6c6"></div>
<div class="a" style="left:262px;top:168.73px;font-size:12.6px;line-height:1;color:#262626;letter-spacing:0.5px">Sl No</div><div class="a" style="left:0;top:197px;width:1128px;height:19px;background:#e6e6e6"></div>
<div class="a" style="left:25px;top:197px;width:64px;height:19px;background:#d2d2d2"></div>
<div class="a" style="left:0;top:217px;width:25px;height:283px;background:#e6e6e6"></div>
<div class="a" style="left:0;top:217px;width:25px;height:19px;background:#d2d2d2"></div>
<svg class="a" style="left:0;top:197px" width="25" height="19"><polygon points="22,4 22,16 10,16" fill="#b4b4b4"/></svg>
<div class="a" style="left:89px;top:217px;width:1px;height:283px;background:#d4d4d4"></div>
<div class="a" style="left:89px;top:197px;width:1px;height:19px;background:#ababab"></div>
<div class="a" style="left:153px;top:217px;width:1px;height:283px;background:#d4d4d4"></div>
<div class="a" style="left:153px;top:197px;width:1px;height:19px;background:#ababab"></div>
<div class="a" style="left:217px;top:217px;width:1px;height:283px;background:#d4d4d4"></div>
<div class="a" style="left:217px;top:197px;width:1px;height:19px;background:#ababab"></div>
<div class="a" style="left:281px;top:217px;width:1px;height:283px;background:#d4d4d4"></div>
<div class="a" style="left:281px;top:197px;width:1px;height:19px;background:#ababab"></div>
<div class="a" style="left:345px;top:217px;width:1px;height:283px;background:#d4d4d4"></div>
<div class="a" style="left:345px;top:197px;width:1px;height:19px;background:#ababab"></div>
<div class="a" style="left:409px;top:217px;width:1px;height:283px;background:#d4d4d4"></div>
<div class="a" style="left:409px;top:197px;width:1px;height:19px;background:#ababab"></div>
<div class="a" style="left:473px;top:217px;width:1px;height:283px;background:#d4d4d4"></div>
<div class="a" style="left:473px;top:197px;width:1px;height:19px;background:#ababab"></div>
<div class="a" style="left:537px;top:217px;width:1px;height:283px;background:#d4d4d4"></div>
<div class="a" style="left:537px;top:197px;width:1px;height:19px;background:#ababab"></div>
<div class="a" style="left:601px;top:217px;width:1px;height:283px;background:#d4d4d4"></div>
<div class="a" style="left:601px;top:197px;width:1px;height:19px;background:#ababab"></div>
<div class="a" style="left:665px;top:217px;width:1px;height:283px;background:#d4d4d4"></div>
<div class="a" style="left:665px;top:197px;width:1px;height:19px;background:#ababab"></div>
<div class="a" style="left:729px;top:217px;width:1px;height:283px;background:#d4d4d4"></div>
<div class="a" style="left:729px;top:197px;width:1px;height:19px;background:#ababab"></div>
<div class="a" style="left:793px;top:217px;width:1px;height:283px;background:#d4d4d4"></div>
<div class="a" style="left:793px;top:197px;width:1px;height:19px;background:#ababab"></div>
<div class="a" style="left:857px;top:217px;width:1px;height:283px;background:#d4d4d4"></div>
<div class="a" style="left:857px;top:197px;width:1px;height:19px;background:#ababab"></div>
<div class="a" style="left:921px;top:217px;width:1px;height:283px;background:#d4d4d4"></div>
<div class="a" style="left:921px;top:197px;width:1px;height:19px;background:#ababab"></div>
<div class="a" style="left:985px;top:197px;width:1px;height:19px;background:#ababab"></div>
<div class="a" style="left:1049px;top:217px;width:1px;height:283px;background:#d4d4d4"></div>
<div class="a" style="left:1049px;top:197px;width:1px;height:19px;background:#ababab"></div>
<div class="a" style="left:1113px;top:217px;width:1px;height:283px;background:#d4d4d4"></div>
<div class="a" style="left:1113px;top:197px;width:1px;height:19px;background:#ababab"></div>
<div class="a" style="left:25px;top:236px;width:1103px;height:1px;background:#d4d4d4"></div>
<div class="a" style="left:0;top:236px;width:25px;height:1px;background:#c6c6c6"></div>
<div class="a" style="left:25px;top:256px;width:1103px;height:1px;background:#d4d4d4"></div>
<div class="a" style="left:0;top:256px;width:25px;height:1px;background:#c6c6c6"></div>
<div class="a" style="left:25px;top:276px;width:1103px;height:1px;background:#d4d4d4"></div>
<div class="a" style="left:0;top:276px;width:25px;height:1px;background:#c6c6c6"></div>
<div class="a" style="left:25px;top:296px;width:1103px;height:1px;background:#d4d4d4"></div>
<div class="a" style="left:0;top:296px;width:25px;height:1px;background:#c6c6c6"></div>
<div class="a" style="left:25px;top:316px;width:1103px;height:1px;background:#d4d4d4"></div>
<div class="a" style="left:0;top:316px;width:25px;height:1px;background:#c6c6c6"></div>
<div class="a" style="left:25px;top:336px;width:1103px;height:1px;background:#d4d4d4"></div>
<div class="a" style="left:0;top:336px;width:25px;height:1px;background:#c6c6c6"></div>
<div class="a" style="left:25px;top:356px;width:1103px;height:1px;background:#d4d4d4"></div>
<div class="a" style="left:0;top:356px;width:25px;height:1px;background:#c6c6c6"></div>
<div class="a" style="left:25px;top:376px;width:1103px;height:1px;background:#d4d4d4"></div>
<div class="a" style="left:0;top:376px;width:25px;height:1px;background:#c6c6c6"></div>
<div class="a" style="left:25px;top:396px;width:1103px;height:1px;background:#d4d4d4"></div>
<div class="a" style="left:0;top:396px;width:25px;height:1px;background:#c6c6c6"></div>
<div class="a" style="left:25px;top:416px;width:1103px;height:1px;background:#d4d4d4"></div>
<div class="a" style="left:0;top:416px;width:25px;height:1px;background:#c6c6c6"></div>
<div class="a" style="left:25px;top:436px;width:1103px;height:1px;background:#d4d4d4"></div>
<div class="a" style="left:0;top:436px;width:25px;height:1px;background:#c6c6c6"></div>
<div class="a" style="left:25px;top:456px;width:1103px;height:1px;background:#d4d4d4"></div>
<div class="a" style="left:0;top:456px;width:25px;height:1px;background:#c6c6c6"></div>
<div class="a" style="left:25px;top:476px;width:1103px;height:1px;background:#d4d4d4"></div>
<div class="a" style="left:0;top:476px;width:25px;height:1px;background:#c6c6c6"></div>
<div class="a" style="left:25px;top:496px;width:1103px;height:1px;background:#d4d4d4"></div>
<div class="a" style="left:0;top:496px;width:25px;height:1px;background:#c6c6c6"></div>
<div class="a" style="left:0;top:216px;width:1128px;height:1px;background:#ababab"></div>
<div class="a" style="left:25px;top:217px;width:1px;height:283px;background:#ababab"></div>
<div class="a hd" style="left:25px;top:197px;width:64px;color:#217346">A</div>
<div class="a hd" style="left:89px;top:197px;width:64px;color:#262626">B</div>
<div class="a hd" style="left:153px;top:197px;width:64px;color:#262626">C</div>
<div class="a hd" style="left:217px;top:197px;width:64px;color:#262626">D</div>
<div class="a hd" style="left:281px;top:197px;width:64px;color:#262626">E</div>
<div class="a hd" style="left:345px;top:197px;width:64px;color:#262626">F</div>
<div class="a hd" style="left:409px;top:197px;width:64px;color:#262626">G</div>
<div class="a hd" style="left:473px;top:197px;width:64px;color:#262626">H</div>
<div class="a hd" style="left:537px;top:197px;width:64px;color:#262626">I</div>
<div class="a hd" style="left:601px;top:197px;width:64px;color:#262626">J</div>
<div class="a hd" style="left:665px;top:197px;width:64px;color:#262626">K</div>
<div class="a hd" style="left:729px;top:197px;width:64px;color:#262626">L</div>
<div class="a hd" style="left:793px;top:197px;width:64px;color:#262626">M</div>
<div class="a hd" style="left:857px;top:197px;width:64px;color:#262626">N</div>
<div class="a hd" style="left:921px;top:197px;width:64px;color:#262626">O</div>
<div class="a hd" style="left:985px;top:197px;width:64px;color:#262626">P</div>
<div class="a hd" style="left:1049px;top:197px;width:64px;color:#262626">Q</div>
<div class="a hd" style="left:1113px;top:197px;width:64px;color:#262626">R</div>
<div class="a hd rhd" style="left:0;top:218px;width:25px;height:19px;line-height:19px;color:#217346">1</div>
<div class="a hd rhd" style="left:0;top:238px;width:25px;height:19px;line-height:19px;color:#262626">2</div>
<div class="a hd rhd" style="left:0;top:258px;width:25px;height:19px;line-height:19px;color:#262626">3</div>
<div class="a hd rhd" style="left:0;top:278px;width:25px;height:19px;line-height:19px;color:#262626">4</div>
<div class="a hd rhd" style="left:0;top:298px;width:25px;height:19px;line-height:19px;color:#262626">5</div>
<div class="a hd rhd" style="left:0;top:318px;width:25px;height:19px;line-height:19px;color:#262626">6</div>
<div class="a hd rhd" style="left:0;top:338px;width:25px;height:19px;line-height:19px;color:#262626">7</div>
<div class="a hd rhd" style="left:0;top:358px;width:25px;height:19px;line-height:19px;color:#262626">8</div>
<div class="a hd rhd" style="left:0;top:378px;width:25px;height:19px;line-height:19px;color:#262626">9</div>
<div class="a hd rhd" style="left:0;top:398px;width:25px;height:19px;line-height:19px;color:#262626">10</div>
<div class="a hd rhd" style="left:0;top:418px;width:25px;height:19px;line-height:19px;color:#262626">11</div>
<div class="a hd rhd" style="left:0;top:438px;width:25px;height:19px;line-height:19px;color:#262626">12</div>
<div class="a hd rhd" style="left:0;top:458px;width:25px;height:19px;line-height:19px;color:#262626">13</div>
<div class="a hd rhd" style="left:0;top:478px;width:25px;height:19px;line-height:19px;color:#262626">14</div>
<div class="a c txt" style="left:26px;top:219px;width:63px;">Sl No</div>
<div class="a c txt" style="left:90px;top:219px;width:63px;">Date</div>
<div class="a c txt" style="left:154px;top:219px;width:63px;">Facility Name</div>
<div class="a c txt" style="left:218px;top:219px;width:63px;">Item Name</div>
<div class="a c txt" style="left:282px;top:219px;width:63px;">Item Category</div>
<div class="a c txt" style="left:346px;top:219px;width:63px;">Batch No</div>
<div class="a c txt" style="left:410px;top:219px;width:63px;">Unit Cost Price</div>
<div class="a c txt" style="left:474px;top:219px;width:63px;">Expiry Date</div>
<div class="a c txt" style="left:538px;top:219px;width:63px;">Opening Stock</div>
<div class="a c txt" style="left:602px;top:219px;width:63px;">Quantity Received</div>
<div class="a c txt" style="left:666px;top:219px;width:63px;">Dispensed</div>
<div class="a c txt" style="left:730px;top:219px;width:63px;">Adjustment</div>
<div class="a c txt" style="left:794px;top:219px;width:63px;">Adjustment</div>
<div class="a c txt" style="left:858px;top:219px;width:63px;">Closing Stock</div>
<div class="a c txt" style="left:922px;top:219px;width:127px;background:#fff;top:217px;height:19px;line-height:23px;">Item Entered Date</div>
<div class="a c num" style="left:26px;top:239px;width:63px;">1</div>
<svg class="a" style="left:26px;top:237px" width="6" height="6"><polygon points="0,0 6,0 0,6" fill="#008000"/></svg>
<div class="a c num" style="left:90px;top:239px;width:63px;">01-08-2025</div>
<div class="a c txt" style="left:154px;top:239px;width:63px;">Dakhinhera</div>
<div class="a c txt" style="left:218px;top:239px;width:63px;">Acetylsalicylic</div>
<div class="a c txt" style="left:282px;top:239px;width:63px;">Drug</div>
<div class="a c num" style="left:346px;top:239px;width:63px;">3432</div>
<svg class="a" style="left:346px;top:237px" width="6" height="6"><polygon points="0,0 6,0 0,6" fill="#008000"/></svg>
<div class="a c num" style="left:410px;top:239px;width:63px;text-align:right;padding-right:2px">100</div>
<div class="a c num" style="left:474px;top:239px;width:63px;">28-02-2026</div>
<div class="a c num" style="left:538px;top:239px;width:63px;">986</div>
<svg class="a" style="left:538px;top:237px" width="6" height="6"><polygon points="0,0 6,0 0,6" fill="#008000"/></svg>
<div class="a c num" style="left:602px;top:239px;width:63px;">1000</div>
<svg class="a" style="left:602px;top:237px" width="6" height="6"><polygon points="0,0 6,0 0,6" fill="#008000"/></svg>
<div class="a c num" style="left:666px;top:239px;width:63px;">0</div>
<svg class="a" style="left:666px;top:237px" width="6" height="6"><polygon points="0,0 6,0 0,6" fill="#008000"/></svg>
<div class="a c num" style="left:730px;top:239px;width:63px;">0</div>
<svg class="a" style="left:730px;top:237px" width="6" height="6"><polygon points="0,0 6,0 0,6" fill="#008000"/></svg>
<div class="a c num" style="left:794px;top:239px;width:63px;">0</div>
<svg class="a" style="left:794px;top:237px" width="6" height="6"><polygon points="0,0 6,0 0,6" fill="#008000"/></svg>
<div class="a c num" style="left:858px;top:239px;width:63px;">986</div>
<svg class="a" style="left:858px;top:237px" width="6" height="6"><polygon points="0,0 6,0 0,6" fill="#008000"/></svg>
<div class="a c num" style="left:922px;top:239px;width:127px;">30-05-2025</div>
<div class="a c num" style="left:26px;top:259px;width:63px;">2</div>
<svg class="a" style="left:26px;top:257px" width="6" height="6"><polygon points="0,0 6,0 0,6" fill="#008000"/></svg>
<div class="a c num" style="left:90px;top:259px;width:63px;">01-08-2025</div>
<div class="a c txt" style="left:154px;top:259px;width:63px;">Dakhinhera</div>
<div class="a c txt" style="left:218px;top:259px;width:63px;">Acetylsalicylic</div>
<div class="a c txt" style="left:282px;top:259px;width:63px;">Drug</div>
<div class="a c num" style="left:346px;top:259px;width:63px;">1234</div>
<svg class="a" style="left:346px;top:257px" width="6" height="6"><polygon points="0,0 6,0 0,6" fill="#008000"/></svg>
<div class="a c num" style="left:410px;top:259px;width:63px;text-align:right;padding-right:2px">2</div>
<div class="a c num" style="left:474px;top:259px;width:63px;">28-02-2026</div>
<div class="a c num" style="left:538px;top:259px;width:63px;">98996</div>
<svg class="a" style="left:538px;top:257px" width="6" height="6"><polygon points="0,0 6,0 0,6" fill="#008000"/></svg>
<div class="a c num" style="left:602px;top:259px;width:63px;">100000</div>
<svg class="a" style="left:602px;top:257px" width="6" height="6"><polygon points="0,0 6,0 0,6" fill="#008000"/></svg>
<div class="a c num" style="left:666px;top:259px;width:63px;">0</div>
<svg class="a" style="left:666px;top:257px" width="6" height="6"><polygon points="0,0 6,0 0,6" fill="#008000"/></svg>
<div class="a c num" style="left:730px;top:259px;width:63px;">0</div>
<svg class="a" style="left:730px;top:257px" width="6" height="6"><polygon points="0,0 6,0 0,6" fill="#008000"/></svg>
<div class="a c num" style="left:794px;top:259px;width:63px;">0</div>
<svg class="a" style="left:794px;top:257px" width="6" height="6"><polygon points="0,0 6,0 0,6" fill="#008000"/></svg>
<div class="a c num" style="left:858px;top:259px;width:63px;">98996</div>
<svg class="a" style="left:858px;top:257px" width="6" height="6"><polygon points="0,0 6,0 0,6" fill="#008000"/></svg>
<div class="a c num" style="left:922px;top:259px;width:127px;">30-05-2025</div>
<div class="a c num" style="left:26px;top:279px;width:63px;">3</div>
<svg class="a" style="left:26px;top:277px" width="6" height="6"><polygon points="0,0 6,0 0,6" fill="#008000"/></svg>
<div class="a c num" style="left:90px;top:279px;width:63px;">01-08-2025</div>
<div class="a c txt" style="left:154px;top:279px;width:63px;">Dakhinhera</div>
<div class="a c txt" style="left:218px;top:279px;width:63px;">Paracetamol</div>
<div class="a c txt" style="left:282px;top:279px;width:63px;">Drug</div>
<div class="a c num" style="left:346px;top:279px;width:63px;">2345</div>
<svg class="a" style="left:346px;top:277px" width="6" height="6"><polygon points="0,0 6,0 0,6" fill="#008000"/></svg>
<div class="a c num" style="left:410px;top:279px;width:63px;text-align:right;padding-right:2px">2</div>
<div class="a c num" style="left:474px;top:279px;width:63px;">23-04-2026</div>
<div class="a c num" style="left:538px;top:279px;width:63px;">988990</div>
<svg class="a" style="left:538px;top:277px" width="6" height="6"><polygon points="0,0 6,0 0,6" fill="#008000"/></svg>
<div class="a c num" style="left:602px;top:279px;width:63px;">999999</div>
<svg class="a" style="left:602px;top:277px" width="6" height="6"><polygon points="0,0 6,0 0,6" fill="#008000"/></svg>
<div class="a c num" style="left:666px;top:279px;width:63px;">0</div>
<svg class="a" style="left:666px;top:277px" width="6" height="6"><polygon points="0,0 6,0 0,6" fill="#008000"/></svg>
<div class="a c num" style="left:730px;top:279px;width:63px;">0</div>
<svg class="a" style="left:730px;top:277px" width="6" height="6"><polygon points="0,0 6,0 0,6" fill="#008000"/></svg>
<div class="a c num" style="left:794px;top:279px;width:63px;">0</div>
<svg class="a" style="left:794px;top:277px" width="6" height="6"><polygon points="0,0 6,0 0,6" fill="#008000"/></svg>
<div class="a c num" style="left:858px;top:279px;width:63px;">988990</div>
<svg class="a" style="left:858px;top:277px" width="6" height="6"><polygon points="0,0 6,0 0,6" fill="#008000"/></svg>
<div class="a c num" style="left:922px;top:279px;width:127px;">30-05-2025</div>
<div class="a c num" style="left:26px;top:299px;width:63px;">4</div>
<svg class="a" style="left:26px;top:297px" width="6" height="6"><polygon points="0,0 6,0 0,6" fill="#008000"/></svg>
<div class="a c num" style="left:90px;top:299px;width:63px;">01-08-2025</div>
<div class="a c txt" style="left:154px;top:299px;width:63px;">Dakhinhera</div>
<div class="a c txt" style="left:218px;top:299px;width:63px;">Acetylsalicylic</div>
<div class="a c txt" style="left:282px;top:299px;width:63px;">Drug</div>
<div class="a c num" style="left:346px;top:299px;width:63px;">1234</div>
<svg class="a" style="left:346px;top:297px" width="6" height="6"><polygon points="0,0 6,0 0,6" fill="#008000"/></svg>
<div class="a c num" style="left:410px;top:299px;width:63px;text-align:right;padding-right:2px">2</div>
<div class="a c num" style="left:474px;top:299px;width:63px;">28-02-2026</div>
<div class="a c num" style="left:538px;top:299px;width:63px;">98996</div>
<svg class="a" style="left:538px;top:297px" width="6" height="6"><polygon points="0,0 6,0 0,6" fill="#008000"/></svg>
<div class="a c num" style="left:602px;top:299px;width:63px;">100000</div>
<svg class="a" style="left:602px;top:297px" width="6" height="6"><polygon points="0,0 6,0 0,6" fill="#008000"/></svg>
<div class="a c num" style="left:666px;top:299px;width:63px;">0</div>
<svg class="a" style="left:666px;top:297px" width="6" height="6"><polygon points="0,0 6,0 0,6" fill="#008000"/></svg>
<div class="a c num" style="left:730px;top:299px;width:63px;">0</div>
<svg class="a" style="left:730px;top:297px" width="6" height="6"><polygon points="0,0 6,0 0,6" fill="#008000"/></svg>
<div class="a c num" style="left:794px;top:299px;width:63px;">0</div>
<svg class="a" style="left:794px;top:297px" width="6" height="6"><polygon points="0,0 6,0 0,6" fill="#008000"/></svg>
<div class="a c num" style="left:858px;top:299px;width:63px;">98996</div>
<svg class="a" style="left:858px;top:297px" width="6" height="6"><polygon points="0,0 6,0 0,6" fill="#008000"/></svg>
<div class="a c num" style="left:922px;top:299px;width:127px;">30-05-2025</div>
<div class="a c num" style="left:26px;top:319px;width:63px;">5</div>
<svg class="a" style="left:26px;top:317px" width="6" height="6"><polygon points="0,0 6,0 0,6" fill="#008000"/></svg>
<div class="a c num" style="left:90px;top:319px;width:63px;">01-08-2025</div>
<div class="a c txt" style="left:154px;top:319px;width:63px;">Dakhinhera</div>
<div class="a c txt" style="left:218px;top:319px;width:63px;">Paracetamol</div>
<div class="a c txt" style="left:282px;top:319px;width:63px;">Drug</div>
<div class="a c num" style="left:346px;top:319px;width:63px;">2345</div>
<svg class="a" style="left:346px;top:317px" width="6" height="6"><polygon points="0,0 6,0 0,6" fill="#008000"/></svg>
<div class="a c num" style="left:410px;top:319px;width:63px;text-align:right;padding-right:2px">2</div>
<div class="a c num" style="left:474px;top:319px;width:63px;">23-04-2026</div>
<div class="a c num" style="left:538px;top:319px;width:63px;">988993</div>
<svg class="a" style="left:538px;top:317px" width="6" height="6"><polygon points="0,0 6,0 0,6" fill="#008000"/></svg>
<div class="a c num" style="left:602px;top:319px;width:63px;">999999</div>
<svg class="a" style="left:602px;top:317px" width="6" height="6"><polygon points="0,0 6,0 0,6" fill="#008000"/></svg>
<div class="a c num" style="left:666px;top:319px;width:63px;">0</div>
<svg class="a" style="left:666px;top:317px" width="6" height="6"><polygon points="0,0 6,0 0,6" fill="#008000"/></svg>
<div class="a c num" style="left:730px;top:319px;width:63px;">0</div>
<svg class="a" style="left:730px;top:317px" width="6" height="6"><polygon points="0,0 6,0 0,6" fill="#008000"/></svg>
<div class="a c num" style="left:794px;top:319px;width:63px;">0</div>
<svg class="a" style="left:794px;top:317px" width="6" height="6"><polygon points="0,0 6,0 0,6" fill="#008000"/></svg>
<div class="a c num" style="left:858px;top:319px;width:63px;">988993</div>
<svg class="a" style="left:858px;top:317px" width="6" height="6"><polygon points="0,0 6,0 0,6" fill="#008000"/></svg>
<div class="a c num" style="left:922px;top:319px;width:127px;">30-05-2025</div>
<div class="a c num" style="left:26px;top:339px;width:63px;">6</div>
<svg class="a" style="left:26px;top:337px" width="6" height="6"><polygon points="0,0 6,0 0,6" fill="#008000"/></svg>
<div class="a c num" style="left:90px;top:339px;width:63px;">01-08-2025</div>
<div class="a c txt" style="left:154px;top:339px;width:63px;">Dakhinhera</div>
<div class="a c txt" style="left:218px;top:339px;width:63px;">Paracetamol</div>
<div class="a c txt" style="left:282px;top:339px;width:63px;">Drug</div>
<div class="a c num" style="left:346px;top:339px;width:63px;">2025</div>
<svg class="a" style="left:346px;top:337px" width="6" height="6"><polygon points="0,0 6,0 0,6" fill="#008000"/></svg>
<div class="a c num" style="left:410px;top:339px;width:63px;text-align:right;padding-right:2px">1</div>
<div class="a c num" style="left:474px;top:339px;width:63px;">30-10-2025</div>
<div class="a c num" style="left:538px;top:339px;width:63px;">19000</div>
<svg class="a" style="left:538px;top:337px" width="6" height="6"><polygon points="0,0 6,0 0,6" fill="#008000"/></svg>
<div class="a c num" style="left:602px;top:339px;width:63px;">20000</div>
<svg class="a" style="left:602px;top:337px" width="6" height="6"><polygon points="0,0 6,0 0,6" fill="#008000"/></svg>
<div class="a c num" style="left:666px;top:339px;width:63px;">0</div>
<svg class="a" style="left:666px;top:337px" width="6" height="6"><polygon points="0,0 6,0 0,6" fill="#008000"/></svg>
<div class="a c num" style="left:730px;top:339px;width:63px;">0</div>
<svg class="a" style="left:730px;top:337px" width="6" height="6"><polygon points="0,0 6,0 0,6" fill="#008000"/></svg>
<div class="a c num" style="left:794px;top:339px;width:63px;">0</div>
<svg class="a" style="left:794px;top:337px" width="6" height="6"><polygon points="0,0 6,0 0,6" fill="#008000"/></svg>
<div class="a c num" style="left:858px;top:339px;width:63px;">19000</div>
<svg class="a" style="left:858px;top:337px" width="6" height="6"><polygon points="0,0 6,0 0,6" fill="#008000"/></svg>
<div class="a c num" style="left:922px;top:339px;width:127px;">30-05-2025</div>
<div class="a c num" style="left:26px;top:359px;width:63px;">7</div>
<svg class="a" style="left:26px;top:357px" width="6" height="6"><polygon points="0,0 6,0 0,6" fill="#008000"/></svg>
<div class="a c num" style="left:90px;top:359px;width:63px;">01-08-2025</div>
<div class="a c txt" style="left:154px;top:359px;width:63px;">Dakhinhera</div>
<div class="a c txt" style="left:218px;top:359px;width:63px;">Paracetamol</div>
<div class="a c txt" style="left:282px;top:359px;width:63px;">Drug</div>
<div class="a c num" style="left:346px;top:359px;width:63px;">2025</div>
<svg class="a" style="left:346px;top:357px" width="6" height="6"><polygon points="0,0 6,0 0,6" fill="#008000"/></svg>
<div class="a c num" style="left:410px;top:359px;width:63px;text-align:right;padding-right:2px">0</div>
<div class="a c num" style="left:474px;top:359px;width:63px;">24-12-2044</div>
<div class="a c num" style="left:538px;top:359px;width:63px;">9395</div>
<svg class="a" style="left:538px;top:357px" width="6" height="6"><polygon points="0,0 6,0 0,6" fill="#008000"/></svg>
<div class="a c num" style="left:602px;top:359px;width:63px;">10000</div>
<svg class="a" style="left:602px;top:357px" width="6" height="6"><polygon points="0,0 6,0 0,6" fill="#008000"/></svg>
<div class="a c num" style="left:666px;top:359px;width:63px;">0</div>
<svg class="a" style="left:666px;top:357px" width="6" height="6"><polygon points="0,0 6,0 0,6" fill="#008000"/></svg>
<div class="a c num" style="left:730px;top:359px;width:63px;">0</div>
<svg class="a" style="left:730px;top:357px" width="6" height="6"><polygon points="0,0 6,0 0,6" fill="#008000"/></svg>
<div class="a c num" style="left:794px;top:359px;width:63px;">0</div>
<svg class="a" style="left:794px;top:357px" width="6" height="6"><polygon points="0,0 6,0 0,6" fill="#008000"/></svg>
<div class="a c num" style="left:858px;top:359px;width:63px;">9395</div>
<svg class="a" style="left:858px;top:357px" width="6" height="6"><polygon points="0,0 6,0 0,6" fill="#008000"/></svg>
<div class="a c num" style="left:922px;top:359px;width:127px;">30-05-2025</div>
<div class="a c num" style="left:26px;top:379px;width:63px;">8</div>
<svg class="a" style="left:26px;top:377px" width="6" height="6"><polygon points="0,0 6,0 0,6" fill="#008000"/></svg>
<div class="a c num" style="left:90px;top:379px;width:63px;">01-08-2025</div>
<div class="a c txt" style="left:154px;top:379px;width:63px;">Dakhinhera</div>
<div class="a c txt" style="left:218px;top:379px;width:63px;">Paracetamol</div>
<div class="a c txt" style="left:282px;top:379px;width:63px;">Drug</div>
<div class="a c num" style="left:346px;top:379px;width:63px;">2023</div>
<svg class="a" style="left:346px;top:377px" width="6" height="6"><polygon points="0,0 6,0 0,6" fill="#008000"/></svg>
<div class="a c num" style="left:410px;top:379px;width:63px;text-align:right;padding-right:2px">1</div>
<div class="a c num" style="left:474px;top:379px;width:63px;">20-11-2025</div>
<div class="a c num" style="left:538px;top:379px;width:63px;">8725</div>
<svg class="a" style="left:538px;top:377px" width="6" height="6"><polygon points="0,0 6,0 0,6" fill="#008000"/></svg>
<div class="a c num" style="left:602px;top:379px;width:63px;">10000</div>
<svg class="a" style="left:602px;top:377px" width="6" height="6"><polygon points="0,0 6,0 0,6" fill="#008000"/></svg>
<div class="a c num" style="left:666px;top:379px;width:63px;">0</div>
<svg class="a" style="left:666px;top:377px" width="6" height="6"><polygon points="0,0 6,0 0,6" fill="#008000"/></svg>
<div class="a c num" style="left:730px;top:379px;width:63px;">0</div>
<svg class="a" style="left:730px;top:377px" width="6" height="6"><polygon points="0,0 6,0 0,6" fill="#008000"/></svg>
<div class="a c num" style="left:794px;top:379px;width:63px;">0</div>
<svg class="a" style="left:794px;top:377px" width="6" height="6"><polygon points="0,0 6,0 0,6" fill="#008000"/></svg>
<div class="a c num" style="left:858px;top:379px;width:63px;">8725</div>
<svg class="a" style="left:858px;top:377px" width="6" height="6"><polygon points="0,0 6,0 0,6" fill="#008000"/></svg>
<div class="a c num" style="left:922px;top:379px;width:127px;">30-05-2025</div>
<div class="a c num" style="left:26px;top:399px;width:63px;">9</div>
<svg class="a" style="left:26px;top:397px" width="6" height="6"><polygon points="0,0 6,0 0,6" fill="#008000"/></svg>
<div class="a c num" style="left:90px;top:399px;width:63px;">01-08-2025</div>
<div class="a c txt" style="left:154px;top:399px;width:63px;">Dakhinhera</div>
<div class="a c txt" style="left:218px;top:399px;width:63px;">Paracetamol</div>
<div class="a c txt" style="left:282px;top:399px;width:63px;">Drug</div>
<div class="a c num" style="left:346px;top:399px;width:63px;">2027</div>
<svg class="a" style="left:346px;top:397px" width="6" height="6"><polygon points="0,0 6,0 0,6" fill="#008000"/></svg>
<div class="a c num" style="left:410px;top:399px;width:63px;text-align:right;padding-right:2px">3</div>
<div class="a c num" style="left:474px;top:399px;width:63px;">17-12-2027</div>
<div class="a c num" style="left:538px;top:399px;width:63px;">799995</div>
<svg class="a" style="left:538px;top:397px" width="6" height="6"><polygon points="0,0 6,0 0,6" fill="#008000"/></svg>
<div class="a c num" style="left:602px;top:399px;width:63px;">800000</div>
<svg class="a" style="left:602px;top:397px" width="6" height="6"><polygon points="0,0 6,0 0,6" fill="#008000"/></svg>
<div class="a c num" style="left:666px;top:399px;width:63px;">0</div>
<svg class="a" style="left:666px;top:397px" width="6" height="6"><polygon points="0,0 6,0 0,6" fill="#008000"/></svg>
<div class="a c num" style="left:730px;top:399px;width:63px;">0</div>
<svg class="a" style="left:730px;top:397px" width="6" height="6"><polygon points="0,0 6,0 0,6" fill="#008000"/></svg>
<div class="a c num" style="left:794px;top:399px;width:63px;">0</div>
<svg class="a" style="left:794px;top:397px" width="6" height="6"><polygon points="0,0 6,0 0,6" fill="#008000"/></svg>
<div class="a c num" style="left:858px;top:399px;width:63px;">799995</div>
<svg class="a" style="left:858px;top:397px" width="6" height="6"><polygon points="0,0 6,0 0,6" fill="#008000"/></svg>
<div class="a c num" style="left:922px;top:399px;width:127px;">30-05-2025</div>
<div class="a c num" style="left:26px;top:419px;width:63px;">10</div>
<svg class="a" style="left:26px;top:417px" width="6" height="6"><polygon points="0,0 6,0 0,6" fill="#008000"/></svg>
<div class="a c num" style="left:90px;top:419px;width:63px;">01-08-2025</div>
<div class="a c txt" style="left:154px;top:419px;width:63px;">Dakhinhera</div>
<div class="a c txt" style="left:218px;top:419px;width:63px;">Paracetamol</div>
<div class="a c txt" style="left:282px;top:419px;width:63px;">Drug</div>
<div class="a c num" style="left:346px;top:419px;width:63px;">8907</div>
<svg class="a" style="left:346px;top:417px" width="6" height="6"><polygon points="0,0 6,0 0,6" fill="#008000"/></svg>
<div class="a c num" style="left:410px;top:419px;width:63px;text-align:right;padding-right:2px">1</div>
<div class="a c num" style="left:474px;top:419px;width:63px;">16-08-2030</div>
<div class="a c num" style="left:538px;top:419px;width:63px;">497995</div>
<svg class="a" style="left:538px;top:417px" width="6" height="6"><polygon points="0,0 6,0 0,6" fill="#008000"/></svg>
<div class="a c num" style="left:602px;top:419px;width:63px;">500000</div>
<svg class="a" style="left:602px;top:417px" width="6" height="6"><polygon points="0,0 6,0 0,6" fill="#008000"/></svg>
<div class="a c num" style="left:666px;top:419px;width:63px;">0</div>
<svg class="a" style="left:666px;top:417px" width="6" height="6"><polygon points="0,0 6,0 0,6" fill="#008000"/></svg>
<div class="a c num" style="left:730px;top:419px;width:63px;">0</div>
<svg class="a" style="left:730px;top:417px" width="6" height="6"><polygon points="0,0 6,0 0,6" fill="#008000"/></svg>
<div class="a c num" style="left:794px;top:419px;width:63px;">0</div>
<svg class="a" style="left:794px;top:417px" width="6" height="6"><polygon points="0,0 6,0 0,6" fill="#008000"/></svg>
<div class="a c num" style="left:858px;top:419px;width:63px;">497995</div>
<svg class="a" style="left:858px;top:417px" width="6" height="6"><polygon points="0,0 6,0 0,6" fill="#008000"/></svg>
<div class="a c num" style="left:922px;top:419px;width:127px;">04-06-2025</div>
<div class="a c num" style="left:26px;top:439px;width:63px;">11</div>
<svg class="a" style="left:26px;top:437px" width="6" height="6"><polygon points="0,0 6,0 0,6" fill="#008000"/></svg>
<div class="a c num" style="left:90px;top:439px;width:63px;">01-08-2025</div>
<div class="a c txt" style="left:154px;top:439px;width:63px;">Dakhinhera</div>
<div class="a c txt" style="left:218px;top:439px;width:63px;">Paracetamol</div>
<div class="a c txt" style="left:282px;top:439px;width:63px;">Drug</div>
<div class="a c num" style="left:346px;top:439px;width:63px;">1234</div>
<svg class="a" style="left:346px;top:437px" width="6" height="6"><polygon points="0,0 6,0 0,6" fill="#008000"/></svg>
<div class="a c num" style="left:410px;top:439px;width:63px;text-align:right;padding-right:2px">1</div>
<div class="a c num" style="left:474px;top:439px;width:63px;">20-06-2025</div>
<div class="a c num" style="left:538px;top:439px;width:63px;">30</div>
<svg class="a" style="left:538px;top:437px" width="6" height="6"><polygon points="0,0 6,0 0,6" fill="#008000"/></svg>
<div class="a c num" style="left:602px;top:439px;width:63px;">100</div>
<svg class="a" style="left:602px;top:437px" width="6" height="6"><polygon points="0,0 6,0 0,6" fill="#008000"/></svg>
<div class="a c num" style="left:666px;top:439px;width:63px;">0</div>
<svg class="a" style="left:666px;top:437px" width="6" height="6"><polygon points="0,0 6,0 0,6" fill="#008000"/></svg>
<div class="a c num" style="left:730px;top:439px;width:63px;">0</div>
<svg class="a" style="left:730px;top:437px" width="6" height="6"><polygon points="0,0 6,0 0,6" fill="#008000"/></svg>
<div class="a c num" style="left:794px;top:439px;width:63px;">0</div>
<svg class="a" style="left:794px;top:437px" width="6" height="6"><polygon points="0,0 6,0 0,6" fill="#008000"/></svg>
<div class="a c num" style="left:858px;top:439px;width:63px;">30</div>
<svg class="a" style="left:858px;top:437px" width="6" height="6"><polygon points="0,0 6,0 0,6" fill="#008000"/></svg>
<div class="a c num" style="left:922px;top:439px;width:127px;">04-06-2025</div>
<div class="a c num" style="left:26px;top:459px;width:63px;">12</div>
<svg class="a" style="left:26px;top:457px" width="6" height="6"><polygon points="0,0 6,0 0,6" fill="#008000"/></svg>
<div class="a c num" style="left:90px;top:459px;width:63px;">01-08-2025</div>
<div class="a c txt" style="left:154px;top:459px;width:63px;">Dakhinhera</div>
<div class="a c txt" style="left:218px;top:459px;width:63px;">Paracetamol</div>
<div class="a c txt" style="left:282px;top:459px;width:63px;">Drug</div>
<div class="a c num" style="left:346px;top:459px;width:63px;">2025</div>
<svg class="a" style="left:346px;top:457px" width="6" height="6"><polygon points="0,0 6,0 0,6" fill="#008000"/></svg>
<div class="a c num" style="left:410px;top:459px;width:63px;text-align:right;padding-right:2px">0</div>
<div class="a c num" style="left:474px;top:459px;width:63px;">11-12-2048</div>
<div class="a c num" style="left:538px;top:459px;width:63px;">2</div>
<svg class="a" style="left:538px;top:457px" width="6" height="6"><polygon points="0,0 6,0 0,6" fill="#008000"/></svg>
<div class="a c num" style="left:602px;top:459px;width:63px;">10</div>
<svg class="a" style="left:602px;top:457px" width="6" height="6"><polygon points="0,0 6,0 0,6" fill="#008000"/></svg>
<div class="a c num" style="left:666px;top:459px;width:63px;">0</div>
<svg class="a" style="left:666px;top:457px" width="6" height="6"><polygon points="0,0 6,0 0,6" fill="#008000"/></svg>
<div class="a c num" style="left:730px;top:459px;width:63px;">0</div>
<svg class="a" style="left:730px;top:457px" width="6" height="6"><polygon points="0,0 6,0 0,6" fill="#008000"/></svg>
<div class="a c num" style="left:794px;top:459px;width:63px;">0</div>
<svg class="a" style="left:794px;top:457px" width="6" height="6"><polygon points="0,0 6,0 0,6" fill="#008000"/></svg>
<div class="a c num" style="left:858px;top:459px;width:63px;">2</div>
<svg class="a" style="left:858px;top:457px" width="6" height="6"><polygon points="0,0 6,0 0,6" fill="#008000"/></svg>
<div class="a c num" style="left:922px;top:459px;width:127px;">04-06-2025</div>
<div class="a c num" style="left:26px;top:479px;width:63px;">13</div>
<svg class="a" style="left:26px;top:477px" width="6" height="6"><polygon points="0,0 6,0 0,6" fill="#008000"/></svg>
<div class="a c num" style="left:90px;top:479px;width:63px;">01-08-2025</div>
<div class="a c txt" style="left:154px;top:479px;width:63px;">Dakhinhera</div>
<div class="a c txt" style="left:218px;top:479px;width:63px;">Paracetamol</div>
<div class="a c txt" style="left:282px;top:479px;width:63px;">Drug</div>
<div class="a c num" style="left:346px;top:479px;width:63px;">2025</div>
<svg class="a" style="left:346px;top:477px" width="6" height="6"><polygon points="0,0 6,0 0,6" fill="#008000"/></svg>
<div class="a c num" style="left:410px;top:479px;width:63px;text-align:right;padding-right:2px">0</div>
<div class="a c num" style="left:474px;top:479px;width:63px;">24-12-2044</div>
<div class="a c num" style="left:538px;top:479px;width:63px;">91</div>
<svg class="a" style="left:538px;top:477px" width="6" height="6"><polygon points="0,0 6,0 0,6" fill="#008000"/></svg>
<div class="a c num" style="left:602px;top:479px;width:63px;">100</div>
<svg class="a" style="left:602px;top:477px" width="6" height="6"><polygon points="0,0 6,0 0,6" fill="#008000"/></svg>
<div class="a c num" style="left:666px;top:479px;width:63px;">0</div>
<svg class="a" style="left:666px;top:477px" width="6" height="6"><polygon points="0,0 6,0 0,6" fill="#008000"/></svg>
<div class="a c num" style="left:730px;top:479px;width:63px;">0</div>
<svg class="a" style="left:730px;top:477px" width="6" height="6"><polygon points="0,0 6,0 0,6" fill="#008000"/></svg>
<div class="a c num" style="left:794px;top:479px;width:63px;">0</div>
<svg class="a" style="left:794px;top:477px" width="6" height="6"><polygon points="0,0 6,0 0,6" fill="#008000"/></svg>
<div class="a c num" style="left:858px;top:479px;width:63px;">91</div>
<svg class="a" style="left:858px;top:477px" width="6" height="6"><polygon points="0,0 6,0 0,6" fill="#008000"/></svg>
<div class="a c num" style="left:922px;top:479px;width:127px;">02-07-2025</div>
<svg class="a" style="left:26px;top:497px" width="6" height="6"><polygon points="0,0 6,0 0,6" fill="#008000"/></svg>
<svg class="a" style="left:346px;top:497px" width="6" height="6"><polygon points="0,0 6,0 0,6" fill="#008000"/></svg>
<svg class="a" style="left:538px;top:497px" width="6" height="6"><polygon points="0,0 6,0 0,6" fill="#008000"/></svg>
<svg class="a" style="left:602px;top:497px" width="6" height="6"><polygon points="0,0 6,0 0,6" fill="#008000"/></svg>
<svg class="a" style="left:666px;top:497px" width="6" height="6"><polygon points="0,0 6,0 0,6" fill="#008000"/></svg>
<svg class="a" style="left:730px;top:497px" width="6" height="6"><polygon points="0,0 6,0 0,6" fill="#008000"/></svg>
<svg class="a" style="left:794px;top:497px" width="6" height="6"><polygon points="0,0 6,0 0,6" fill="#008000"/></svg>
<svg class="a" style="left:858px;top:497px" width="6" height="6"><polygon points="0,0 6,0 0,6" fill="#008000"/></svg>
<div class="a" style="left:24px;top:215px;width:67px;height:23px;border:2px solid #217346"></div>
<div class="a" style="left:87px;top:234px;width:6px;height:6px;background:#217346;border:1px solid #fff"></div></body></html>
